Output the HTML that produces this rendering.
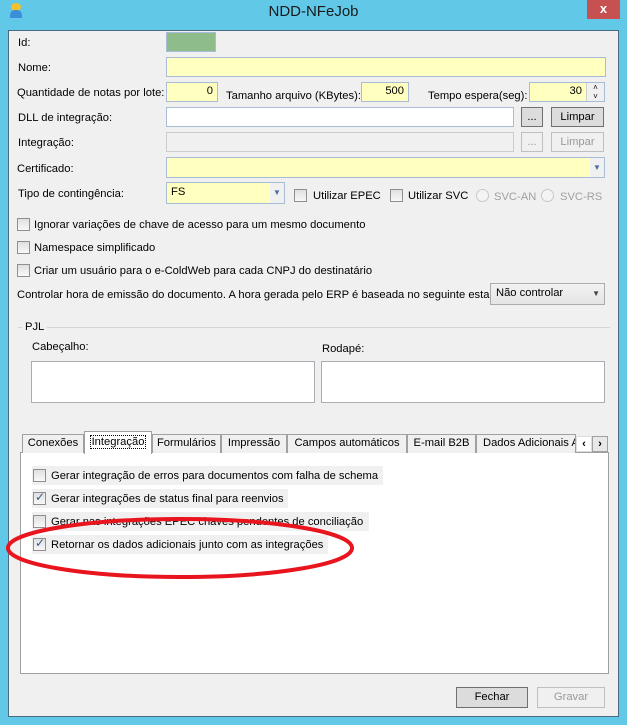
<!DOCTYPE html>
<html><head><meta charset="utf-8"><style>
*{box-sizing:border-box;margin:0;padding:0}
body{width:627px;height:725px;background:#61c8e8;position:relative;overflow:hidden;font-family:"Liberation Sans",sans-serif;font-size:11.2px;color:#000}
.a{position:absolute}
.t{position:absolute;white-space:nowrap;line-height:14px}
.in{position:absolute;border:1px solid #a9bcd6;background:#ffffc0}
.btn{position:absolute;border:1px solid #707070;background:#dcdcdc;text-align:center;line-height:18px}
.dis{border-color:#bfbfbf;background:#f0f0f0;color:#9a9a9a}
.cb{position:absolute;width:13px;height:13px;border:1px solid #8f8f8f;background:linear-gradient(#e0e0e0,#f8f8f8)}
.rd{position:absolute;width:13px;height:13px;border:1px solid #c8c8c8;border-radius:50%;background:#f4f4f4}
.tab{position:absolute;top:434px;height:19px;border:1px solid #a0a0a0;border-bottom:none;background:#f0f0f0;text-align:center;line-height:17px;white-space:nowrap;overflow:hidden}
.it{position:absolute;left:32px;height:19px;background:#f0f0f0}
.chk::after{content:"✓";position:absolute;left:1px;top:-3px;font-size:12px;color:#3c5a8a}
</style></head><body>
<div class="a" style="left:8px;top:30px;width:611px;height:687px;background:#f0f0f0;border:1px solid #4a6b80"></div>
<div class="t" style="left:0;width:627px;top:3px;text-align:center;font-size:15px;line-height:18px;color:#1a1a1a">NDD-NFeJob</div>
<div class="a" style="left:11px;top:3px;width:10px;height:8px;border-radius:50%;background:#f2c12e"></div>
<div class="a" style="left:10px;top:10px;width:12px;height:8px;border-radius:5px 5px 0 0;background:#3a8fd8"></div>
<div class="a" style="left:587px;top:0;width:33px;height:19px;background:#c75050;color:#fff;text-align:center;font-weight:bold;font-size:13px;line-height:17px">x</div>

<div class="t" style="left:18px;top:36px">Id:</div>
<div class="a" style="left:166px;top:32px;width:50px;height:20px;background:#8fbc8b;border:1px solid #a9bcd6"></div>
<div class="t" style="left:18px;top:61px">Nome:</div>
<div class="in" style="left:166px;top:57px;width:440px;height:20px"></div>
<div class="t" style="left:17px;top:86px">Quantidade de notas por lote:</div>
<div class="in" style="left:166px;top:82px;width:52px;height:20px;text-align:right;padding-right:4px;line-height:17px">0</div>
<div class="t" style="left:226px;top:89px">Tamanho arquivo (KBytes):</div>
<div class="in" style="left:361px;top:82px;width:48px;height:20px;text-align:right;padding-right:4px;line-height:17px">500</div>
<div class="t" style="left:428px;top:89px">Tempo espera(seg):</div>
<div class="in" style="left:529px;top:82px;width:76px;height:20px;text-align:right;padding-right:22px;line-height:17px">30</div>
<div class="a" style="left:586px;top:83px;width:18px;height:18px;background:#f0f0f0;border-left:1px solid #ccc;font-size:8px;line-height:9px;text-align:center">˄<br>˅</div>
<div class="t" style="left:18px;top:111px">DLL de integração:</div>
<div class="in" style="left:166px;top:107px;width:348px;height:20px;background:#fff"></div>
<div class="btn" style="left:521px;top:107px;width:22px;height:20px">...</div>
<div class="btn" style="left:551px;top:107px;width:53px;height:20px">Limpar</div>
<div class="t" style="left:18px;top:136px">Integração:</div>
<div class="in" style="left:166px;top:132px;width:348px;height:20px;background:#f0f0f0;border-color:#ccc"></div>
<div class="btn dis" style="left:521px;top:132px;width:22px;height:20px">...</div>
<div class="btn dis" style="left:551px;top:132px;width:53px;height:20px">Limpar</div>
<div class="t" style="left:17px;top:162px">Certificado:</div>
<div class="in" style="left:166px;top:157px;width:439px;height:21px"></div>
<div class="a" style="left:590px;top:158px;width:14px;height:19px;background:#f0f0f0;color:#4a6fa8;font-size:8px;text-align:center;line-height:19px">▼</div>
<div class="t" style="left:18px;top:187px">Tipo de contingência:</div>
<div class="in" style="left:166px;top:182px;width:119px;height:22px;border-color:#a9bcd6;padding-left:4px;line-height:18px">FS</div>
<div class="a" style="left:270px;top:183px;width:14px;height:20px;background:#f0f0f0;color:#4a6fa8;font-size:8px;text-align:center;line-height:20px">▼</div>
<div class="cb" style="left:294px;top:189px"></div><div class="t" style="left:313px;top:189px">Utilizar EPEC</div>
<div class="cb" style="left:390px;top:189px"></div><div class="t" style="left:408px;top:189px">Utilizar SVC</div>
<div class="rd" style="left:476px;top:189px"></div><div class="t" style="left:494px;top:190px;color:#a0a0a0">SVC-AN</div>
<div class="rd" style="left:541px;top:189px"></div><div class="t" style="left:560px;top:190px;color:#a0a0a0">SVC-RS</div>

<div class="cb" style="left:17px;top:218px"></div><div class="t" style="left:34px;top:218px">Ignorar variações de chave de acesso para um mesmo documento</div>
<div class="cb" style="left:17px;top:241px"></div><div class="t" style="left:34px;top:241px">Namespace simplificado</div>
<div class="cb" style="left:17px;top:264px"></div><div class="t" style="left:34px;top:264px">Criar um usuário para o e-ColdWeb para cada CNPJ do destinatário</div>
<div class="t" style="left:17px;top:288px">Controlar hora de emissão do documento. A hora gerada pelo ERP é baseada no seguinte estado:</div>
<div class="a" style="left:490px;top:283px;width:115px;height:22px;border:1px solid #acacac;background:linear-gradient(#f2f2f2,#e5e5e5);padding-left:5px;line-height:19px">Não controlar<span style="position:absolute;right:4px;font-size:8px;color:#444">▼</span></div>

<div class="a" style="left:18px;top:327px;width:592px;border-top:1px solid #d5d5d5"></div>
<div class="t" style="left:22px;top:320px;background:#f0f0f0;padding:0 3px">PJL</div>
<div class="t" style="left:32px;top:340px">Cabeçalho:</div>
<div class="a" style="left:31px;top:361px;width:284px;height:42px;background:#fff;border:1px solid #abadb3"></div>
<div class="t" style="left:322px;top:342px">Rodapé:</div>
<div class="a" style="left:321px;top:361px;width:284px;height:42px;background:#fff;border:1px solid #abadb3"></div>

<div class="a" style="left:20px;top:452px;width:589px;height:222px;background:#fff;border:1px solid #a0a0a0"></div>
<div class="tab" style="left:22px;width:62px">Conexões</div>
<div class="tab" style="left:84px;top:431px;height:23px;width:68px;background:#fff;z-index:2;line-height:20px"><span style="border:1px dotted #000;padding:0 1px">Integração</span></div>
<div class="tab" style="left:152px;width:69px">Formulários</div>
<div class="tab" style="left:221px;width:66px">Impressão</div>
<div class="tab" style="left:287px;width:120px">Campos automáticos</div>
<div class="tab" style="left:407px;width:69px">E-mail B2B</div>
<div class="tab" style="left:476px;width:100px;text-align:left;padding-left:6px">Dados Adicionais A</div>
<div class="a" style="left:576px;top:436px;width:16px;height:16px;background:#fff;border:1px solid #ddd;text-align:center;line-height:14px;font-weight:bold">‹</div>
<div class="a" style="left:592px;top:436px;width:16px;height:16px;background:#e8e8e8;border:1px solid #a0a0a0;text-align:center;line-height:14px;font-weight:bold">›</div>

<div class="it" style="top:466px;width:351px"></div><div class="cb" style="left:33px;top:469px"></div><div class="t" style="left:51px;top:469px">Gerar integração de erros para documentos com falha de schema</div>
<div class="it" style="top:489px;width:256px"></div><div class="cb chk" style="left:33px;top:492px"></div><div class="t" style="left:51px;top:492px">Gerar integrações de status final para reenvios</div>
<div class="it" style="top:512px;width:337px"></div><div class="cb" style="left:33px;top:515px"></div><div class="t" style="left:51px;top:515px">Gerar nas integrações EPEC chaves pendentes de conciliação</div>
<div class="it" style="top:535px;width:296px"></div><div class="cb chk" style="left:33px;top:538px"></div><div class="t" style="left:51px;top:538px">Retornar os dados adicionais junto com as integrações</div>
<svg class="a" style="left:0;top:0" width="627" height="725"><ellipse cx="180" cy="548" rx="172" ry="29" fill="none" stroke="#e8141e" stroke-width="4"/></svg>

<div class="btn" style="left:456px;top:687px;width:72px;height:21px">Fechar</div>
<div class="btn dis" style="left:537px;top:687px;width:68px;height:21px">Gravar</div>
</body></html>
